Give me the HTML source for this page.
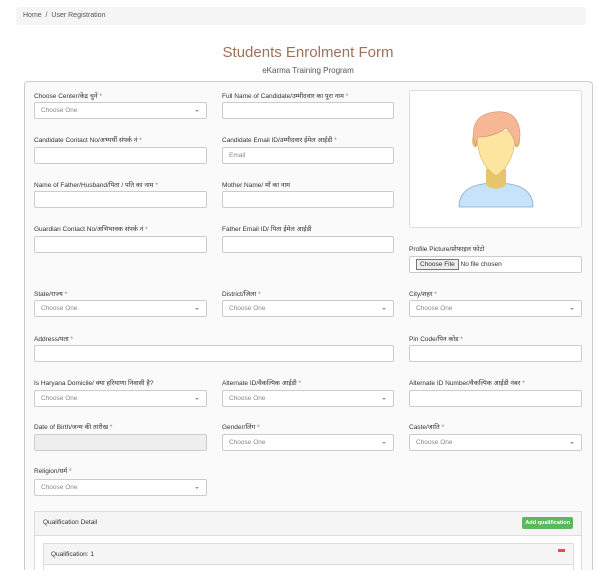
<!DOCTYPE html>
<html style="height:570px;overflow:hidden"><head><meta charset="utf-8"><style>
*{box-sizing:border-box;margin:0;padding:0}
body{width:606px;height:570px;background:#fff;font-family:"Liberation Sans",sans-serif;position:relative;overflow:hidden;color:#333}
.a{position:absolute}
.bc{left:16px;top:7px;width:570px;height:18px;background:#f5f5f5;border-radius:3px;font-size:7px;color:#555;padding:5px 7px}
.panel{left:24px;top:81px;width:569px;height:489px;background:#fafafa;border:1px solid #ccc;border-bottom:none;border-radius:4px 4px 0 0}
.l{position:absolute;font-size:6.5px;color:#333;white-space:nowrap}
.l i{color:#d9534f;font-style:normal}
.in{position:absolute;height:17px;background:#fff;border:1px solid #ccc;border-radius:2px;font-size:6.5px;color:#888;padding:4px 6px}
.sel::after{content:"";position:absolute;right:7px;top:7px;border-left:2px solid transparent;border-right:2px solid transparent;border-top:2px solid #999}
.c1{left:34px;width:173px}.c2{left:222px;width:172px}.c3{left:409px;width:173px}
</style></head><body>
<div class="a bc">Home &nbsp;/&nbsp; User Registration</div>
<div class="a" style="left:0;width:616px;top:44px;text-align:center;font-size:15px;color:#a0705a">Students Enrolment Form</div>
<div class="a" style="left:0;width:616px;top:66px;text-align:center;font-size:8px;color:#555">eKarma Training Program</div>
<div class="a panel"></div>

<div class="l" style="left:34px;top:91px">Choose Center/केंद्र चुनें <i>*</i></div>
<div class="in sel c1" style="top:102px">Choose One</div>
<div class="l" style="left:222px;top:91px">Full Name of Candidate/उम्मीदवार का पूरा नाम <i>*</i></div>
<div class="in c2" style="top:102px"></div>

<div class="l" style="left:34px;top:135px">Candidate Contact No/अभ्यर्थी संपर्क नं <i>*</i></div>
<div class="in c1" style="top:147px"></div>
<div class="l" style="left:222px;top:135px">Candidate Email ID/उम्मीदवार ईमेल आईडी <i>*</i></div>
<div class="in c2" style="top:147px">Email</div>

<div class="l" style="left:34px;top:180px">Name of Father/Husband/पिता / पति का नाम <i>*</i></div>
<div class="in c1" style="top:191px"></div>
<div class="l" style="left:222px;top:180px">Mother Name/ माँ का नाम</div>
<div class="in c2" style="top:191px"></div>

<div class="l" style="left:34px;top:224px">Guardian Contact No/अभिभावक संपर्क नं <i>*</i></div>
<div class="in c1" style="top:236px"></div>
<div class="l" style="left:222px;top:224px">Father Email ID/ पिता ईमेल आईडी</div>
<div class="in c2" style="top:236px"></div>

<div class="a" style="left:409px;top:90px;width:173px;height:138px;background:#fff;border:1px solid #ddd;border-radius:3px">
<svg width="173" height="138" viewBox="0 0 173 138">
<path d="M49 116 Q49 92 86 92 Q123 92 123 116 Z" fill="#c5e4fb" stroke="#8aa6d4" stroke-width="0.8"/>
<path d="M76 78 L76 94 Q86 102 96 94 L96 78 Z" fill="#e6c56d"/>
<ellipse cx="65" cy="50" rx="3" ry="6" fill="#e6c56d"/>
<ellipse cx="107" cy="50" rx="3" ry="6" fill="#e6c56d"/>
<path d="M67 40 Q66 72 86 85 Q106 72 105 40 Z" fill="#fde59f" stroke="#d9b45c" stroke-width="0.6"/>
<path d="M64 50 Q60 24 84 21 Q108 18 110 42 Q110 52 106 56 Q104 44 96 37 Q84 46 68 46 Q66 50 66 56 Z" fill="#f6b894" stroke="#d58c70" stroke-width="0.6"/>
</svg></div>
<div class="l" style="left:409px;top:244px">Profile Picture/प्रोफाइल फोटो</div>
<div class="in c3" style="top:256px;color:#333;padding:2px 6px"><span style="display:inline-block;border:1px solid #777;background:#eee;padding:1px 3px;font-size:6.5px">Choose File</span> No file chosen</div>

<div class="l" style="left:34px;top:289px">State/राज्य <i>*</i></div>
<div class="in sel c1" style="top:300px">Choose One</div>
<div class="l" style="left:222px;top:289px">District/जिला <i>*</i></div>
<div class="in sel c2" style="top:300px">Choose One</div>
<div class="l" style="left:409px;top:289px">City/शहर <i>*</i></div>
<div class="in sel c3" style="top:300px">Choose One</div>

<div class="l" style="left:34px;top:334px">Address/पता <i>*</i></div>
<div class="in" style="left:34px;width:360px;top:345px"></div>
<div class="l" style="left:409px;top:334px">Pin Code/पिन कोड <i>*</i></div>
<div class="in c3" style="top:345px"></div>

<div class="l" style="left:34px;top:378px">Is Haryana Domicile/ क्या हरियाणा निवासी है?</div>
<div class="in sel c1" style="top:390px">Choose One</div>
<div class="l" style="left:222px;top:378px">Alternate ID/वैकल्पिक आईडी <i>*</i></div>
<div class="in sel c2" style="top:390px">Choose One</div>
<div class="l" style="left:409px;top:378px">Alternate ID Number/वैकल्पिक आईडी नंबर <i>*</i></div>
<div class="in c3" style="top:390px"></div>

<div class="l" style="left:34px;top:422px">Date of Birth/जन्म की तारीख <i>*</i></div>
<div class="in c1" style="top:434px;background:#eee"></div>
<div class="l" style="left:222px;top:422px">Gender/लिंग <i>*</i></div>
<div class="in sel c2" style="top:434px">Choose One</div>
<div class="l" style="left:409px;top:422px">Caste/जाति <i>*</i></div>
<div class="in sel c3" style="top:434px">Choose One</div>

<div class="l" style="left:34px;top:466px">Religion/धर्म <i>*</i></div>
<div class="in sel c1" style="top:479px">Choose One</div>

<div class="a" style="left:34px;top:511px;width:548px;height:59px;border:1px solid #ddd;border-bottom:none;background:#fff;overflow:hidden">
<div style="height:24px;background:#f5f5f5;border-bottom:1px solid #ddd;font-size:6.5px;padding:7px 8px;position:relative">Qualification Detail
<span style="position:absolute;right:8px;top:5px;background:#5cb85c;color:#fff;font-size:5.5px;font-weight:bold;padding:3px 3px;border-radius:2px">Add qualification</span></div>
<div style="position:absolute;left:8px;top:31px;width:531px;height:40px;border:1px solid #ddd">
<div style="height:21px;background:#f5f5f5;border-bottom:1px solid #ddd;font-size:6.5px;padding:7px 7px;position:relative">Qualification: 1<span style="position:absolute;right:8px;top:5px;width:7px;height:3px;background:#e74c3c"></span></div>
</div></div>
</body></html>
